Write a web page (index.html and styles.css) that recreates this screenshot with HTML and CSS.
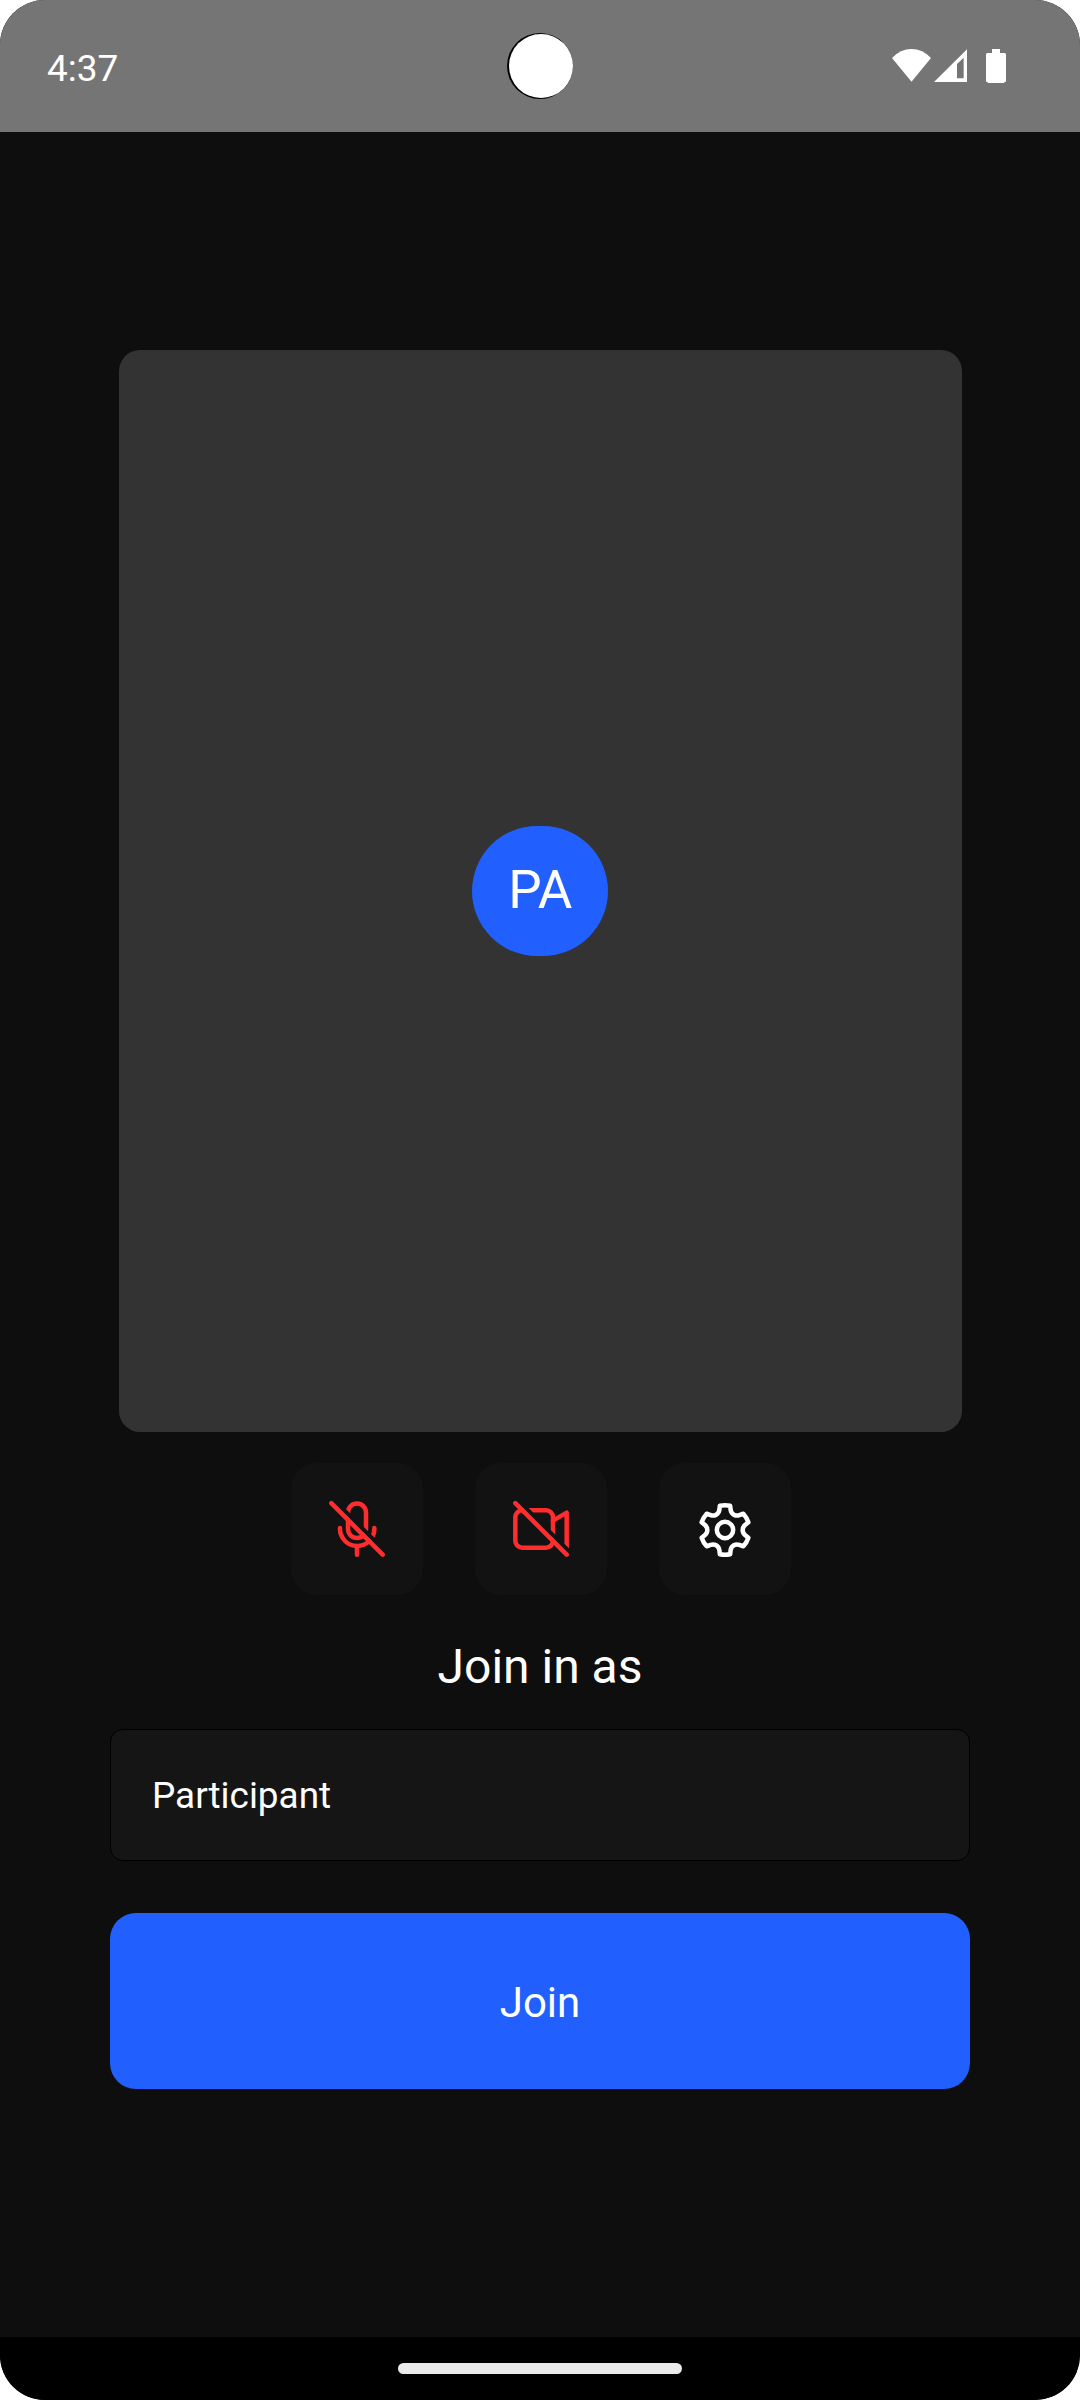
FILE: index.html
```html
<!DOCTYPE html>
<html lang="en">
<head>
<meta charset="utf-8">
<title>Join</title>
<link rel="stylesheet" href="styles.css">
</head>
<body>
<div class="screen">
  <header class="status-bar">
    <span class="clock">4:37</span>
    <span class="camera"><span class="camera-lens"></span></span>
    <svg class="status-icons" viewBox="96 147 342 102" fill="#fff" aria-hidden="true">
      <path d="M154.500 245L96 174Q121 147 154.500 147Q188 147 213 174Z"/>
      <path fill-rule="evenodd" d="M222 246L321 148V246ZM291 192V235H311V173Z"/>
      <path d="M396 147H420V159H435L438 162V245H433V249H383V245H378V162L381 159H396Z"/>
    </svg>
  </header>
  <main class="lobby">
    <section class="preview"><div class="avatar">PA</div></section>
    <div class="controls">
      <button class="control" aria-label="Unmute microphone">
        <svg viewBox="33 129 396 396" fill="none" stroke="#ff2d2d" stroke-width="13.500" stroke-linecap="round">
          <mask id="mic-gap" maskUnits="userSpaceOnUse" x="33" y="129" width="396" height="396">
            <path d="M33 129h396v396H33z" fill="#fff" stroke="none"/>
            <path d="M140 218L330 408" stroke="#000" stroke-width="12"/>
          </mask>
          <g mask="url(#mic-gap)">
            <rect x="204" y="250.500" width="54" height="103.500" rx="27"/>
            <path d="M180 324v2.500a51.500 51.500 0 0 0 103 0V324M231 378v26"/>
          </g>
          <path d="M154 249.500L308 404"/>
        </svg>
      </button>
      <button class="control" aria-label="Turn camera on">
        <svg viewBox="45 69 396 396" fill="none" stroke="#ff2d2d" stroke-width="13.500" stroke-linecap="round">
          <mask id="cam-gap" maskUnits="userSpaceOnUse" x="45" y="69" width="396" height="396">
            <path d="M45 69h396v396H45z" fill="#fff" stroke="none"/>
            <path d="M150 156.500L350 356.500" stroke="#000" stroke-width="12"/>
          </mask>
          <g mask="url(#cam-gap)">
            <rect x="166" y="211" width="113" height="112" rx="21"/>
            <path d="M279 242L320 218V324" stroke-linejoin="round"/>
          </g>
          <path d="M166 189.500L320 344"/>
        </svg>
      </button>
      <button class="control" aria-label="Settings">
        <svg viewBox="-198 -201 396 396" fill="none" stroke="#fff" stroke-width="13.500" stroke-linejoin="round">
          <circle r="24.500"/>
          <path d="M-70 23L-60 15Q-53 9 -53 0Q-53 -9 -60 -15L-70 -23Q-65 -38 -55 -49L-43 -44.500Q-34.300 -41.400 -26.500 -45.900Q-18.700 -50.400 -17 -59.500L-15.500 -73Q0 -76 15.500 -73L17 -59.500Q18.700 -50.400 26.500 -45.900Q34.300 -41.400 43 -44.500L55 -49Q65 -38 70 -23L60 -15Q53 -9 53 0Q53 9 60 15L70 23Q65 38 55 49L43 44.500Q34.300 41.400 26.500 45.900Q18.700 50.400 17 59.500L15.500 73Q0 76 -15.500 73L-17 59.500Q-18.700 50.400 -26.500 45.900Q-34.300 41.400 -43 44.500L-55 49Q-65 38 -70 23Z"/>
        </svg>
      </button>
    </div>
    <h1 class="title">Join in as</h1>
    <div class="name-field">Participant</div>
    <button class="join">Join</button>
  </main>
  <footer class="nav-bar"><span class="nav-handle"></span></footer>
</div>
</body>
</html>
```
FILE: styles.css
```css
* { box-sizing: border-box; }

body {
  margin: 0;
  background: #fff;
  color: #fff;
  font-family: Roboto, sans-serif;
}

button {
  border: 0;
  padding: 0;
  color: inherit;
  font: inherit;
}

.screen {
  display: flex;
  flex-direction: column;
  width: 1080px;
  height: 2400px;
  overflow: hidden;
  border-radius: 45px;
  background: #0e0e0e;
}

.status-bar {
  display: grid;
  grid-template-columns: 1fr 66px 1fr;
  align-items: center;
  height: 132px;
  padding: 0 74px 0 47px;
  background: #757575;
}

.clock {
  padding-top: 6px;
  font-size: 37px;
  line-height: 44px;
}

.camera {
  display: flex;
  justify-content: flex-end;
  align-items: center;
  width: 66px;
  height: 66px;
  margin-left: 13.500px;
  border-radius: 50%;
  background: #000;
}

.camera-lens {
  width: 64px;
  height: 64px;
  border-radius: 50%;
  background: #fff;
}

.status-icons {
  justify-self: end;
  width: 114px;
  height: 34px;
}

.lobby {
  display: flex;
  flex: 1;
  flex-direction: column;
  align-items: center;
  padding-top: 218px;
}

.preview {
  display: flex;
  justify-content: center;
  align-items: center;
  width: 843px;
  height: 1082px;
  margin-left: 1px;
  border-radius: 21px;
  background: #333;
}

.avatar {
  width: 136px;
  height: 130px;
  margin-right: 1px;
  border-radius: 65px;
  background: #2160ff;
  font-size: 53px;
  line-height: 129px;
  letter-spacing: -0.5px;
  text-align: center;
}

.controls {
  display: flex;
  gap: 52px;
  margin: 31px 0 0 2px;
}

.control {
  width: 132px;
  height: 132px;
  border-radius: 26px;
  background: #121212;
}

.control svg {
  display: block;
  width: 132px;
  height: 132px;
}

.title {
  margin: 43px 0 0;
  font-size: 48px;
  font-weight: 400;
  line-height: 58px;
}

.name-field {
  width: 860px;
  height: 132px;
  margin-top: 33px;
  padding: 1px 0 0 41px;
  border: 1px solid #000;
  border-radius: 13px;
  background: #151515;
  font-size: 36.900px;
  line-height: 130px;
}

.join {
  width: 860px;
  height: 176px;
  margin-top: 52px;
  padding-top: 2px;
  border-radius: 26px;
  background: #2160ff;
  font-size: 42px;
}

.nav-bar {
  display: flex;
  justify-content: center;
  height: 63px;
  padding-top: 26px;
  background: #000;
}

.nav-handle {
  width: 284px;
  height: 11px;
  border-radius: 6px;
  background: #ebebeb;
}
```
